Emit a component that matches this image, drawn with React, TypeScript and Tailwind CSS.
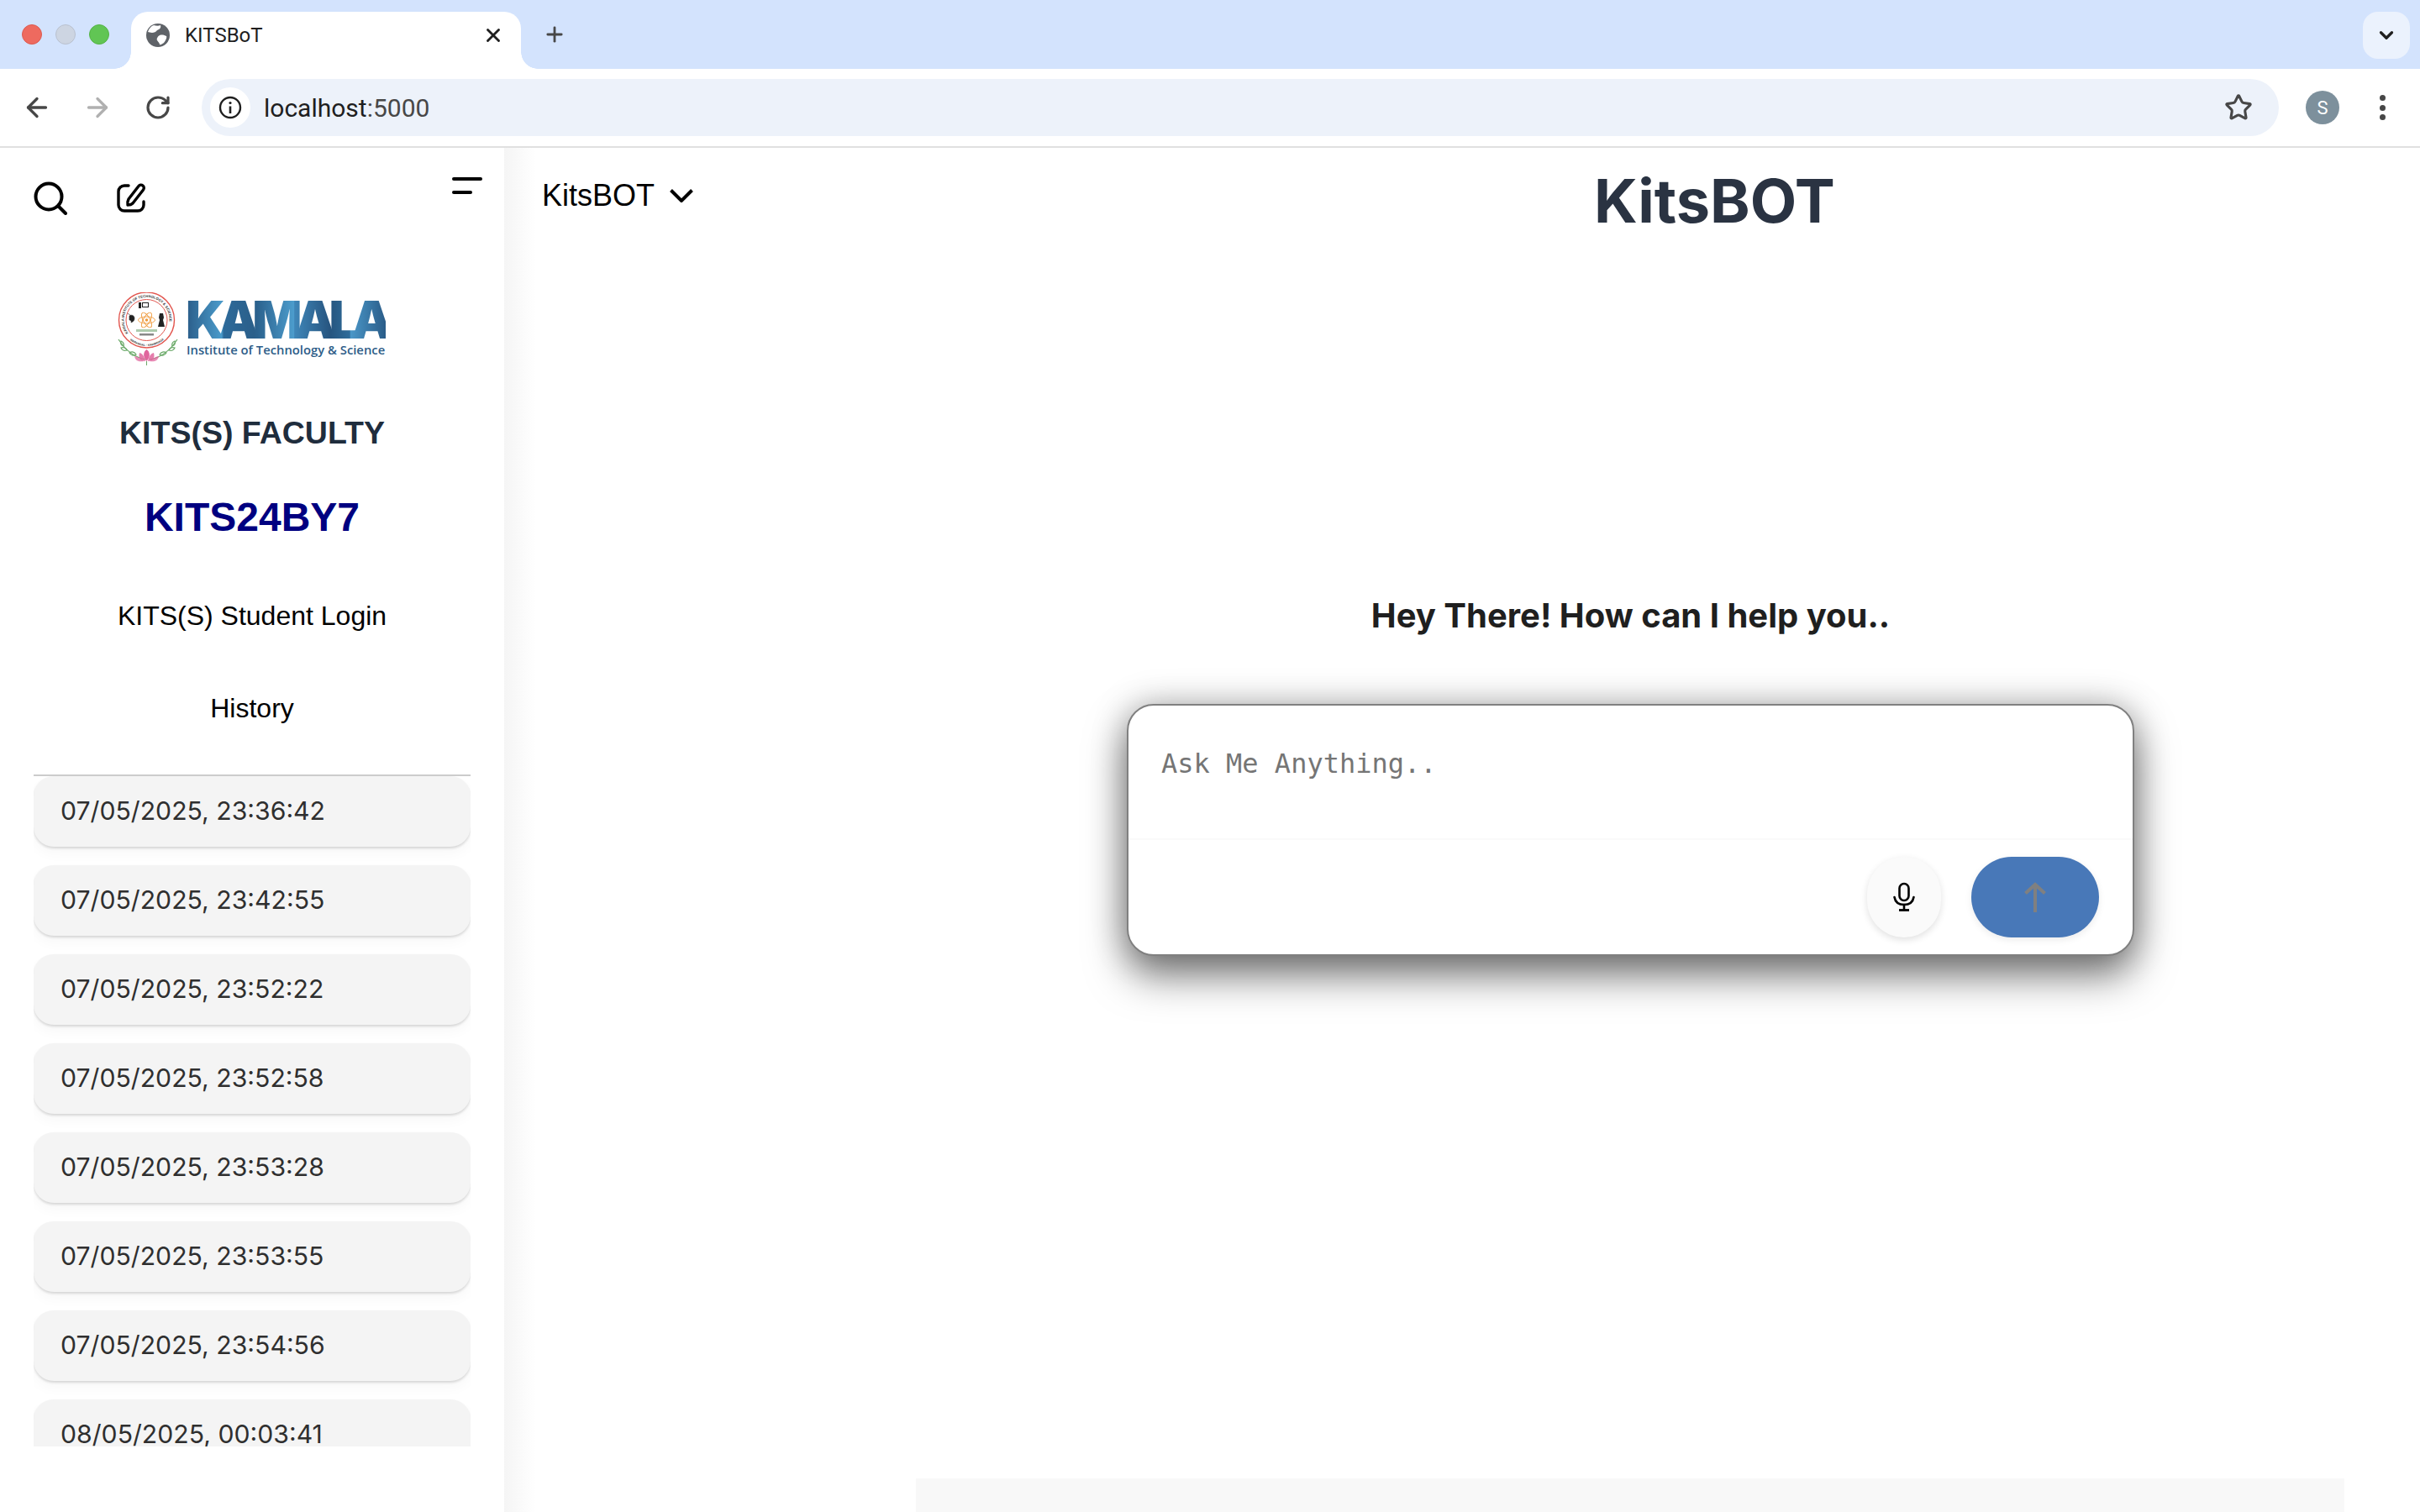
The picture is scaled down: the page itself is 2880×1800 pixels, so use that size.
import React from "react";
import { ArrowLeft, ArrowRight, RotateCw, Star, X, Plus, ChevronDown } from "lucide-react";

const times = [
  "07/05/2025, 23:36:42",
  "07/05/2025, 23:42:55",
  "07/05/2025, 23:52:22",
  "07/05/2025, 23:52:58",
  "07/05/2025, 23:53:28",
  "07/05/2025, 23:53:55",
  "07/05/2025, 23:54:56",
  "08/05/2025, 00:03:41",
];

function Globe() {
  return (
    <svg width="28" height="28" viewBox="0 0 28 28" className="shrink-0">
      <circle cx="14" cy="14" r="14" fill="#5f6368" />
      <path d="M9 2c3 1 6 1 8 0 1 3-1 5-4 6-1 2-4 3-6 3-2 0-4-1-5-1 1-4 4-7 7-8zM16 14c3-1 6 0 8 1 1 1-1 6-3 8-2 1-4 3-5 2 0-2-2-3-3-5-1-2 1-5 3-6z" fill="#fff" />
    </svg>
  );
}

function Seal() {
  return (
    <svg width="76" height="88" viewBox="0 0 76 88" className="shrink-0">
      <defs>
        <path id="ring-top" d="M14.4 48.500A27 27 0 1 1 58.600 48.500" fill="none" />
        <path id="ring-bot" d="M16.500 56.700A31 31 0 0 0 56.500 56.700" fill="none" />
      </defs>
      <g stroke="#6aa968" strokeWidth="1.2" fill="none">
        <path d="M36 80C24 78 12 70 3 56" />
        <path d="M40 80c12-2 24-10 33-24" />
        <path d="M6 66c3-1 6 0 7 3-3 1-6 0-7-3zM16 72c3-2 6-1 8 2-3 2-6 1-8-2zM6 58c2 1 4 3 3 6-3-1-4-3-3-6zM70 66c-3-1-6 0-7 3 3 1 6 0 7-3zM60 72c-3-2-6-1-8 2 3 2 6 1 8-2zM70 58c-2 1-4 3-3 6 3-1 4-3 3-6z" />
      </g>
      <circle cx="36.500" cy="33" r="33" fill="#fff" stroke="#e2554e" strokeWidth="1.400" />
      <circle cx="36.500" cy="33" r="24.500" fill="#fff" stroke="#e2554e" strokeWidth="1" />
      <text fontSize="4.200" fontWeight="700" fill="#333" fontFamily="'Liberation Sans', sans-serif">
        <textPath href="#ring-top">KAMALA INSTITUTE OF TECHNOLOGY &amp; SCIENCE</textPath>
      </text>
      <text fontSize="3.400" fontWeight="700" fill="#333" fontFamily="'Liberation Sans', sans-serif">
        <textPath href="#ring-bot">WARANGAL · KARIMNAGAR</textPath>
      </text>
      <g fill="none" stroke="#ef9a3c" strokeWidth="0.900">
        <ellipse cx="36.500" cy="33" rx="10" ry="4" />
        <ellipse cx="36.500" cy="33" rx="10" ry="4" transform="rotate(60 36.500 33)" />
        <ellipse cx="36.500" cy="33" rx="10" ry="4" transform="rotate(120 36.500 33)" />
      </g>
      <circle cx="36.500" cy="33" r="1.800" fill="#ef9a3c" />
      <path d="M27 12h3v7h-3zM31 12h8v6h-8zM33 19h4" fill="#222" />
      <rect x="32" y="13" width="6" height="4" fill="#fff" />
      <path d="M16 28c3-2 6 0 6 3s-2 4-4 5c1-2-1-3-2-3zM14 25l4 3" fill="#222" stroke="#222" strokeWidth="0.600" />
      <path d="M52 25h4l1 5-1 3 2 8h-8l2-8-1-3z" fill="#222" />
      <rect x="24" y="44" width="25" height="3" fill="#8bb58a" opacity="0.7" />
      <rect x="28" y="49" width="17" height="2.500" fill="#555" opacity="0.7" />
      <g fill="#e0669d">
        <path d="M36.500 68c4 3 5 8 0 14-5-6-4-11 0-14z" />
        <path d="M28 72c4 1 6 5 7 10-5 0-9-3-7-10zM45 72c-4 1-6 5-7 10 5 0 9-3 7-10z" opacity="0.85" />
        <path d="M22 76c3 0 7 3 11 6-5 1-10 0-11-6zM51 76c-3 0-7 3-11 6 5 1 10 0 11-6z" opacity="0.75" />
      </g>
      <path d="M36.500 82v5" stroke="#6aa968" strokeWidth="1" />
    </svg>
  );
}

function Mic() {
  return (
    <svg width="28" height="36" viewBox="0 0 28 36" fill="none" stroke="#000" strokeWidth="2.600" strokeLinecap="round">
      <rect x="8.500" y="2" width="11" height="20" rx="5.500" />
      <path d="M2.500 18c1 6 5.500 9 11.500 9s10.500-3 11.500-9" />
      <path d="M14 27v6" />
      <path d="M8 33.500h12" strokeWidth="2.800" strokeLinecap="butt" />
    </svg>
  );
}

function Arrow() {
  return (
    <svg width="26" height="36" viewBox="0 0 26 36" fill="none" stroke="#808080" strokeWidth="4">
      <path d="M13 36V3" />
      <path d="M1.500 13.500 13 3l11.500 10.500" />
    </svg>
  );
}

export default function App() {
  return (
    <div className="flex h-[1800px] w-[2880px] flex-col overflow-hidden bg-white font-['Inter',sans-serif]">
      <div className="flex h-[82px] shrink-0 bg-[#d3e3fd]">
        <div className="flex w-[156px] shrink-0 items-center gap-[16px] pl-[26px]">
          <span className="h-[24px] w-[24px] rounded-full border border-[#dc5a50] bg-[#ee6a5f]" />
          <span className="h-[24px] w-[24px] rounded-full border border-[#b9c1cf] bg-[#cdd5e2]" />
          <span className="h-[24px] w-[24px] rounded-full border border-[#54b344] bg-[#61c554]" />
        </div>
        <div className="relative mt-[14px] flex h-[68px] w-[464px] shrink-0 items-center rounded-t-[20px] bg-white pl-[18px] pb-[12px] pr-[20px]">
          <span className="absolute bottom-0 left-[-20px] h-[20px] w-[20px] bg-[radial-gradient(circle_at_0_0,#d3e3fd_19.500px,#fff_20px)]" />
          <span className="absolute bottom-0 right-[-20px] h-[20px] w-[20px] bg-[radial-gradient(circle_at_100%_0,#d3e3fd_19.500px,#fff_20px)]" />
          <Globe />
          <span className="ml-[18px] font-['Roboto',sans-serif] text-[24px] text-[#1f1f1f]">KITSBoT</span>
          <X className="ml-auto" size={26} strokeWidth={2.6} color="#1f1f1f" />
        </div>
        <div className="flex h-[82px] w-[80px] items-center justify-center">
          <Plus size={28} strokeWidth={2.4} color="#474747" />
        </div>
        <div className="ml-auto mr-[12px] mt-[14px] flex h-[56px] w-[56px] items-center justify-center rounded-[18px] bg-[#ebf2fd]">
          <ChevronDown size={26} strokeWidth={3} color="#1f1f1f" />
        </div>
      </div>

      <div className="flex h-[94px] shrink-0 items-center rounded-t-[16px] border-b-2 border-[#e0e0e0] bg-white pl-[26px]">
        <ArrowLeft size={36} strokeWidth={2.2} color="#474747" />
        <ArrowRight className="ml-[36px]" size={36} strokeWidth={2.2} color="#b0b0b0" />
        <RotateCw className="ml-[38px]" size={32} strokeWidth={2.4} color="#474747" />
        <div className="ml-[36px] flex h-[68px] w-[2472px] shrink-0 items-center rounded-full bg-[#edf2fa] pl-[10px] pr-[31px]">
          <div className="flex h-[48px] w-[48px] items-center justify-center rounded-full bg-white">
            <svg width="28" height="28" viewBox="0 0 28 28" fill="none" stroke="#1f1f1f" strokeWidth="2.400">
              <circle cx="14" cy="14" r="12" />
              <path d="M14 12.500V21" strokeWidth="2.600" />
              <circle cx="14" cy="8.500" r="1.600" fill="#1f1f1f" stroke="none" />
            </svg>
          </div>
          <span className="ml-[16px] font-['Roboto',sans-serif] text-[30px] text-[#1f1f1f]">
            localhost<span className="text-[#474747]">:5000</span>
          </span>
          <Star className="ml-auto" size={34} strokeWidth={2.2} color="#474747" />
        </div>
        <div className="ml-[32px] flex h-[40px] w-[40px] shrink-0 items-center justify-center rounded-full bg-[#7d909c] font-['Roboto',sans-serif] text-[22px] text-white">
          S
        </div>
        <div className="ml-[48px] flex flex-col gap-[4.500px]">
          <span className="h-[7px] w-[7px] rounded-full bg-[#474747]" />
          <span className="h-[7px] w-[7px] rounded-full bg-[#474747]" />
          <span className="h-[7px] w-[7px] rounded-full bg-[#474747]" />
        </div>
      </div>

      <div className="flex min-h-0 flex-1">
        <aside className="flex w-[600px] shrink-0 flex-col bg-white font-['Liberation_Sans',sans-serif]">
          <div className="flex h-[172px] shrink-0 items-start pl-[40px] pr-[26px] pt-[35px]">
            <svg className="mt-[5px]" width="40" height="40" viewBox="0 0 40 40" fill="none" stroke="#000" strokeWidth="4" strokeLinecap="round">
              <circle cx="18" cy="18" r="15.500" />
              <path d="M29.500 29.500 38 38" />
            </svg>
            <svg className="ml-[58px] mt-[7px]" width="36" height="36" viewBox="0 0 36 36" fill="none" stroke="#000" strokeWidth="3.400" strokeLinecap="round" strokeLinejoin="round">
              <path d="M15 3H10a7 7 0 0 0-7 7v16a7 7 0 0 0 7 7h16a7 7 0 0 0 7-7v-4" />
              <path d="M27 3.500a3.500 3.500 0 0 1 5.500 4.500L20 24c-1 1-4 2-6 2-.5-2 0-5 1-7z" />
            </svg>
            <div className="ml-auto flex flex-col gap-[12px]">
              <span className="h-[4px] w-[36px] rounded-full bg-black" />
              <span className="h-[4px] w-[24px] rounded-full bg-black" />
            </div>
          </div>
          <div className="flex h-[88px] shrink-0 items-center pl-[138px]">
            <Seal />
            <div className="ml-[7px] flex flex-col pb-[7px]">
              <span className="bg-[linear-gradient(90deg,#2a5c88_0%,#4a9bcb_18%,#2d6a9a_19%,#2b5f8a_34%,#2c638f_36%,#4c9ccc_54%,#3f86b8_54.500%,#275580_72%,#265680_72.500%,#2f6c9a_82%,#4a97c8_82.500%,#2a5c88_100%)] bg-clip-text font-['Inter',sans-serif] text-[62px] font-black leading-[54px] tracking-[-8.600px] text-transparent">
                KAMALA
              </span>
              <span className="ml-[1px] font-['Open_Sans',sans-serif] text-[14.800px] font-semibold leading-[16px] text-[#2d5d88]">
                Institute of Technology &amp; Science
              </span>
            </div>
          </div>
          <div className="mt-[59px] h-[40px] shrink-0 text-center text-[37.500px] font-bold leading-[40px] text-[#1f2d3d]">KITS(S) FACULTY</div>
          <div className="mt-[53px] h-[56px] shrink-0 text-center text-[48px] font-bold leading-[56px] text-[#000080]">KITS24BY7</div>
          <div className="mt-[69px] h-[40px] shrink-0 text-center text-[32px] leading-[40px] text-black">KITS(S) Student Login</div>
          <div className="mt-[70px] h-[40px] shrink-0 text-center text-[32px] leading-[40px] text-black">History</div>
          <div className="mx-[40px] mt-[59px] h-[2px] shrink-0 bg-[#cccccc]" />
          <div className="mx-[40px] flex h-[798px] shrink-0 flex-col gap-[22px] overflow-hidden font-['Inter',sans-serif]">
            {times.map((t) => (
              <div
                key={t}
                className="flex h-[84px] shrink-0 items-center rounded-[24px] bg-[#f4f4f4] pl-[32px] text-[30.200px] text-[#2f2f2f] shadow-[0_2px_3px_rgba(0,0,0,0.14),0_8px_16px_rgba(0,0,0,0.03)]"
              >
                {t}
              </div>
            ))}
          </div>
        </aside>

        <main className="flex min-w-0 flex-1 flex-col bg-[linear-gradient(90deg,#f5f5f5,#fff_38px)]">
          <div className="flex h-[200px] shrink-0 items-start">
            <div className="flex w-[1297px] shrink-0 items-center gap-[18px] pl-[45px] pt-[37px] font-['Liberation_Sans',sans-serif] text-[36px] leading-[40px] text-black">
              KitsBOT
              <svg width="28" height="16" viewBox="0 0 28 16" fill="none" stroke="#000" strokeWidth="4">
                <path d="M1.500 1.500 14 14 26.500 1.500" />
              </svg>
            </div>
            <h1 className="pt-[23px] text-[72px] font-bold leading-[80px] text-[#2a3342]">KitsBOT</h1>
          </div>
          <div className="ml-[741px] w-[1199px]">
            <h2 className="mt-[329px] text-center text-[40px] font-bold leading-[56px] text-[#1f1f1f]">Hey There! How can I help you..</h2>
            <div className="mt-[77px] flex h-[300px] flex-col overflow-hidden rounded-[32px] border-2 border-[#808080] bg-white shadow-[0_24px_48px_rgba(0,0,0,0.5),0_0_40px_rgba(0,0,0,0.25)]">
              <textarea
                className="h-[160px] w-full shrink-0 resize-none border-b-2 border-[#fafafa] pl-[39px] pt-[49px] font-['DejaVu_Sans_Mono',monospace] text-[32px] leading-[40px] outline-none placeholder:text-[#757575]"
                placeholder="Ask Me Anything.."
              />
              <div className="flex justify-end gap-[36px] pr-[40px] pt-[20px]">
                <button className="flex h-[96px] w-[88px] items-center justify-center rounded-full bg-[#fafafa] shadow-[0_3px_8px_rgba(0,0,0,0.12)]">
                  <Mic />
                </button>
                <button className="flex h-[96px] w-[152px] items-center justify-center rounded-full bg-[#4878b8] shadow-[0_3px_8px_rgba(0,0,0,0.08)]">
                  <Arrow />
                </button>
              </div>
            </div>
          </div>
          <div className="ml-[490px] mt-auto h-[40px] w-[1700px] shrink-0 bg-[#f8f8f8]" />
        </main>
      </div>
    </div>
  );
}
